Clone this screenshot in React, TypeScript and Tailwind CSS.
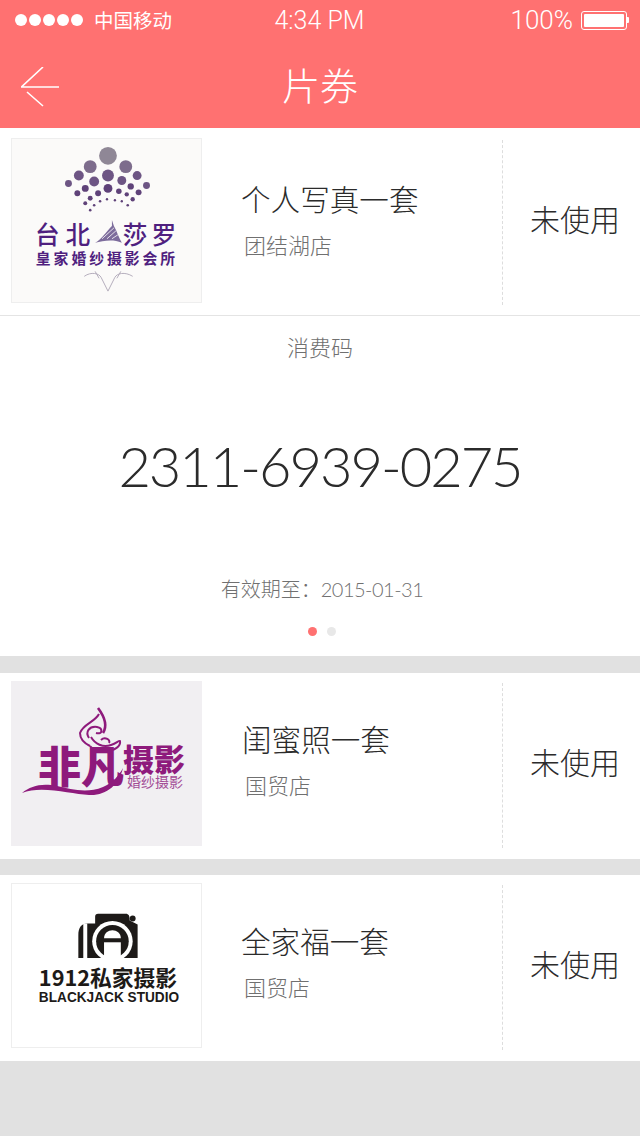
import React from "react";

const cjk = "font-['Noto_Sans_CJK_SC','Noto_Sans',sans-serif]";

function TaipeiLogo() {
  const dots: [number, number, number, string][] = [
    [108, 155, 9, "#8f8796"], [90, 166, 6.5, "#7d6c8c"], [126, 166, 6.5, "#7d6c8c"],
    [78.5, 175, 5, "#6d5584"], [108, 175, 6, "#6d5584"], [137.5, 175, 4.5, "#6d5584"],
    [68, 183, 3.5, "#6d5584"], [94, 181, 5, "#6d5584"], [122, 180, 4.5, "#6d5584"],
    [147, 185, 3.5, "#6d5584"], [85, 188, 3.5, "#5f4279"], [108, 188, 4.5, "#5f4279"],
    [131, 186, 3.2, "#5f4279"], [77, 193, 3, "#5f4279"], [98, 193, 3, "#5f4279"],
    [119, 191, 2.8, "#5f4279"], [127, 194, 2.2, "#5f4279"], [139, 192, 3, "#5f4279"],
    [90, 198, 2.5, "#5f4279"], [133, 199, 2.2, "#5f4279"], [85, 203, 2, "#5f4279"],
    [100, 201, 1.3, "#5f4279"], [107, 199, 1.2, "#5f4279"], [115, 200, 1.2, "#5f4279"],
    [122, 201, 1.2, "#5f4279"], [128, 205, 1.3, "#5f4279"], [94, 205, 1.3, "#5f4279"], [90, 210, 1.3, "#5f4279"],
  ];
  return (
    <svg viewBox="0 138 191 165" className="w-full h-full">
      {dots.map(([cx, cy, r, fill], i) => (
        <circle key={i} cx={cx - 11} cy={cy} r={r} fill={fill} />
      ))}
      <text x="23" y="244" fontSize="25" letterSpacing="6" fontWeight="500" fill="#4f1f7f" fontFamily="Noto Sans CJK SC">台北</text>
      <path d="M84 243 C90 240 95 232 101 226 L101 220 L103 226 C106 231 108 238 111 243 C102 239 92 241 84 243 Z" fill="#7d6c9c" />
      <path d="M91 239 L103 228 M96 239 L105 231 M101 239 L107 235" stroke="#e6e2ea" strokeWidth="1" fill="none" />
      <text x="112" y="244" fontSize="25" letterSpacing="4" fontWeight="500" fill="#4f1f7f" fontFamily="Noto Sans CJK SC">莎罗</text>
      <text x="24" y="265" fontSize="15" letterSpacing="3" fontWeight="700" fill="#4f1f7f" fontFamily="Noto Sans CJK SC">皇家婚纱摄影会所</text>
      <path d="M73 277 C80 272 88 274 90 278 L97 292 L104 278 C106 274 114 272 122 277 M84 272 L88 279 M110 272 L106 279" stroke="#b4adbc" strokeWidth="1" fill="none" />
    </svg>
  );
}

function FeifanLogo() {
  return (
    <svg viewBox="0 681 191 165" className="w-full h-full">
      <g fill="none" stroke="#8e1a7c" strokeWidth="2">
        <path d="M87 708 C93 716 97 725 92 733" strokeWidth="2.6" />
        <path d="M88 714 C84 722 72 724 69 733 C69 739 73 743 79 746" />
        <path d="M78 738 C74 732 78 726 86 727 C92 728 92 735 85 733" />
        <path d="M80 737 C84 744 92 748 100 745 C106 743 108 740 109 741 C110 746 104 751 94 751 C88 751 82 750 79 746" />
        <path d="M90 740 C94 736 100 740 98 743" />
      </g>
      <text x="27" y="783" fontSize="43" fontWeight="900" fill="#8e1a7c" fontFamily="Noto Sans CJK SC">非凡</text>
      <text x="112" y="771" fontSize="31" fontWeight="900" fill="#8e1a7c" fontFamily="Noto Sans CJK SC">摄影</text>
      <text x="116" y="787" fontSize="14" fill="#a34c96" fontFamily="Noto Sans CJK SC">婚纱摄影</text>
      <path d="M11 793 C20 786 30 783 46 786 C60 789 75 794 92 787 C102 783 108 775 112 768 C108 785 95 796 78 795 C60 794 30 785 11 793 Z" fill="#8e1a7c" />
    </svg>
  );
}

function BlackjackLogo() {
  return (
    <svg viewBox="0 883 191 165" className="w-full h-full">
      <path d="M67 935 C67 927 70 923 76 923 L84 923 L84 916 C84 914 85 913 87 913 L115 913 C118 913 119 915 119 920 L127 924 L127 958 L67 958 Z" fill="#1d1a18" />
      <rect x="72" y="923" width="4" height="35" fill="#fff" />
      <circle cx="101.5" cy="941" r="20.5" fill="#fff" />
      <circle cx="101.5" cy="941" r="16.5" fill="#1d1a18" />
      <path d="M93 938 C93 927 110 927 110 938 Z" fill="#fff" />
      <rect x="93" y="942" width="17" height="19" fill="#fff" />
      <circle cx="122" cy="918" r="3" fill="#1d1a18" />
      <text x="27" y="986" fontSize="22" fontWeight="700" fill="#1d1a18" fontFamily="Noto Sans CJK SC">1912私家摄影</text>
      <text x="27" y="1002" fontSize="14.5" fontWeight="700" fill="#1d1a18" fontFamily="Liberation Sans" textLength="142" lengthAdjust="spacingAndGlyphs">BLACKJACK STUDIO</text>
    </svg>
  );
}

function CouponRow({ logo, logoBg, title, titleClass, store, top, height, borderless }: {
  logo: React.ReactNode;
  logoBg: string;
  title: string;
  titleClass: string;
  store: string;
  top: string;
  height: string;
  borderless?: boolean;
}) {
  return (
    <div className={`flex bg-white shrink-0 ${height} ${top}`}>
      <div className={`ml-[11px] w-[191px] h-[165px] shrink-0 ${logoBg} ${borderless ? "" : "border border-[#eeeeee]"}`}>
        {logo}
      </div>
      <div className={`flex-1 flex flex-col ${titleClass}`}>
        <div className="text-[29.6px] leading-[40px] font-light text-[#2b2b2b] whitespace-nowrap">{title}</div>
        <div className="text-[22px] leading-[30px] font-light text-[#707070] mt-[10px] pl-[3px]">{store}</div>
      </div>
      <div className="w-[138px] h-[165px] shrink-0 border-l border-dashed border-[#dddddd] mt-[2px] flex items-center justify-center pl-[7px] pb-[8px]">
        <span className="text-[30px] font-light text-[#2b2b2b]">未使用</span>
      </div>
    </div>
  );
}

export default function App() {
  return (
    <div className={`w-[640px] h-[1136px] flex flex-col bg-[#e1e1e1] ${cjk}`}>
      <div className="h-[128px] bg-[#ff7171] text-white shrink-0">
        <div className="h-[40px] grid grid-cols-3 items-center pl-[15px] pr-[11px]">
          <div className="flex items-center">
            <div className="flex gap-[2px]">
              {[0, 1, 2, 3, 4].map((i) => (
                <span key={i} className="w-[12px] h-[12px] rounded-full bg-white" />
              ))}
            </div>
            <span className="ml-[11px] text-[19.5px] whitespace-nowrap">中国移动</span>
          </div>
          <div className="text-center text-[25px] leading-[32px] pt-[1px] pr-[5px] font-['Roboto',sans-serif] font-light whitespace-nowrap">4:34 PM</div>
          <div className="flex items-center justify-end gap-[8px]">
            <span className="text-[26px] font-['Roboto',sans-serif] font-light">100%</span>
            <div className="flex items-center">
              <div className="w-[46px] h-[19px] border border-white rounded-[3px] p-[2px]">
                <div className="w-full h-full bg-white rounded-[1px]" />
              </div>
              <div className="w-[2px] h-[6px] bg-white rounded-r-[1px]" />
            </div>
          </div>
        </div>
        <div className="h-[88px] relative flex items-center justify-center">
          <svg className="absolute left-[21px] top-[27px]" width="40" height="40" viewBox="0 0 40 40" fill="none" stroke="#fff" strokeWidth="1.6">
            <path d="M0 20H38M0.5 20L22 0M6 25L22 39" />
          </svg>
          <span className="text-[38px] leading-[48px] font-light">片券</span>
        </div>
      </div>

      <CouponRow
        logo={<TaipeiLogo />}
        logoBg="bg-[#fbfaf9]"
        title="个人写真一套"
        titleClass="pl-[39px] pt-[41px]"
        store="团结湖店"
        top="pt-[10px] border-b border-[#e4e4e4]"
        height="h-[188px]"
      />
      <div className="h-[340px] bg-white flex flex-col items-center shrink-0">
        <div className="mt-[15px] text-[22px] leading-[30px] font-light text-[#707070]">消费码</div>
        <div className="mt-[73px] text-[56px] leading-[64px] tracking-[-2px] font-['Lato',sans-serif] font-light text-[#2b2b2b] whitespace-nowrap">2311-6939-0275</div>
        <div className="mt-[76px] pl-[4px] text-[20px] leading-[30px] font-light text-[#707070] whitespace-nowrap">
          有效期至：<span className="font-['Lato',sans-serif] tracking-[-0.5px]">2015-01-31</span>
        </div>
        <div className="mt-[23px] flex gap-[10px] pl-[3px]">
          <span className="w-[9px] h-[9px] rounded-full bg-[#ff7171]" />
          <span className="w-[9px] h-[9px] rounded-full bg-[#e8e8e8]" />
        </div>
      </div>

      <div className="h-[17px] shrink-0" />
      <CouponRow
        logo={<FeifanLogo />}
        logoBg="bg-[#f1eff2]"
        title="闺蜜照一套"
        titleClass="pl-[40px] pt-[38px]"
        store="国贸店"
        top="pt-[8px]"
        height="h-[186px]"
        borderless
      />
      <div className="h-[16px] shrink-0" />
      <CouponRow
        logo={<BlackjackLogo />}
        logoBg="bg-white"
        title="全家福一套"
        titleClass="pl-[39px] pt-[38px]"
        store="国贸店"
        top="pt-[8px]"
        height="h-[186px]"
      />
    </div>
  );
}
